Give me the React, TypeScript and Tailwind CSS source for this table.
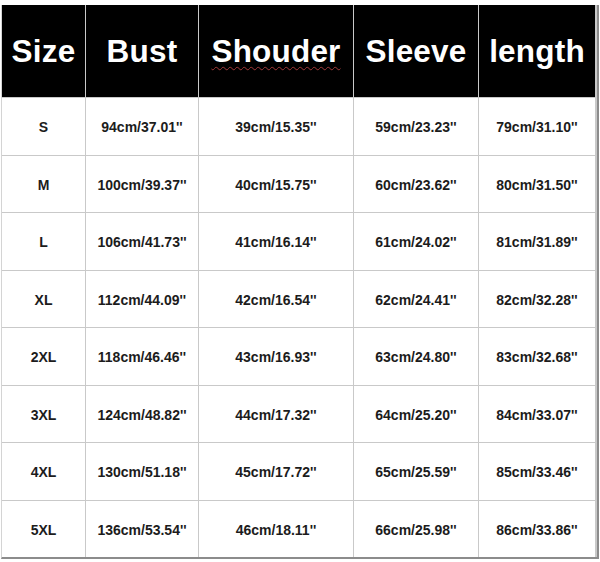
const headers = ["Size", "Bust", "Shouder", "Sleeve", "length"];

const rows = [
  ["S", "94cm/37.01''", "39cm/15.35''", "59cm/23.23''", "79cm/31.10''"],
  ["M", "100cm/39.37''", "40cm/15.75''", "60cm/23.62''", "80cm/31.50''"],
  ["L", "106cm/41.73''", "41cm/16.14''", "61cm/24.02''", "81cm/31.89''"],
  ["XL", "112cm/44.09''", "42cm/16.54''", "62cm/24.41''", "82cm/32.28''"],
  ["2XL", "118cm/46.46''", "43cm/16.93''", "63cm/24.80''", "83cm/32.68''"],
  ["3XL", "124cm/48.82''", "44cm/17.32''", "64cm/25.20''", "84cm/33.07''"],
  ["4XL", "130cm/51.18''", "45cm/17.72''", "65cm/25.59''", "85cm/33.46''"],
  ["5XL", "136cm/53.54''", "46cm/18.11''", "66cm/25.98''", "86cm/33.86''"],
];

export default function App() {
  return (
    <div
      className="w-[600px] h-[562px] bg-white pt-[5px] pl-[1px]"
      style={{ fontFamily: '"Liberation Sans", Arial, sans-serif' }}
    >
      <div className="w-[598px] border-l border-l-[#d4d4d4] border-r-2 border-b-2 border-r-[#8c8c8c] border-b-[#8c8c8c]">
        <div className="grid grid-cols-[83px_112px_154px_124px_116px] grid-rows-[92px_repeat(8,56.5px)] gap-px bg-[#c9c9c9]">
          {headers.map((h) => (
            <div
              key={h}
              className="bg-black flex items-center justify-center pt-[2px] text-white font-bold text-[31.5px] tracking-[0.2px]"
            >
              {h === "Shouder" ? (
                <span className="underline decoration-wavy decoration-[#a33a3a] decoration-1 underline-offset-[4px]">
                  {h}
                </span>
              ) : (
                h
              )}
            </div>
          ))}
          {rows.map((r) =>
            r.map((cell, i) => (
              <div
                key={r[0] + i}
                className="bg-white flex items-center justify-center pt-[3px] text-[14px] font-bold text-[#1c1c1c]"
              >
                {cell}
              </div>
            ))
          )}
        </div>
      </div>
    </div>
  );
}
